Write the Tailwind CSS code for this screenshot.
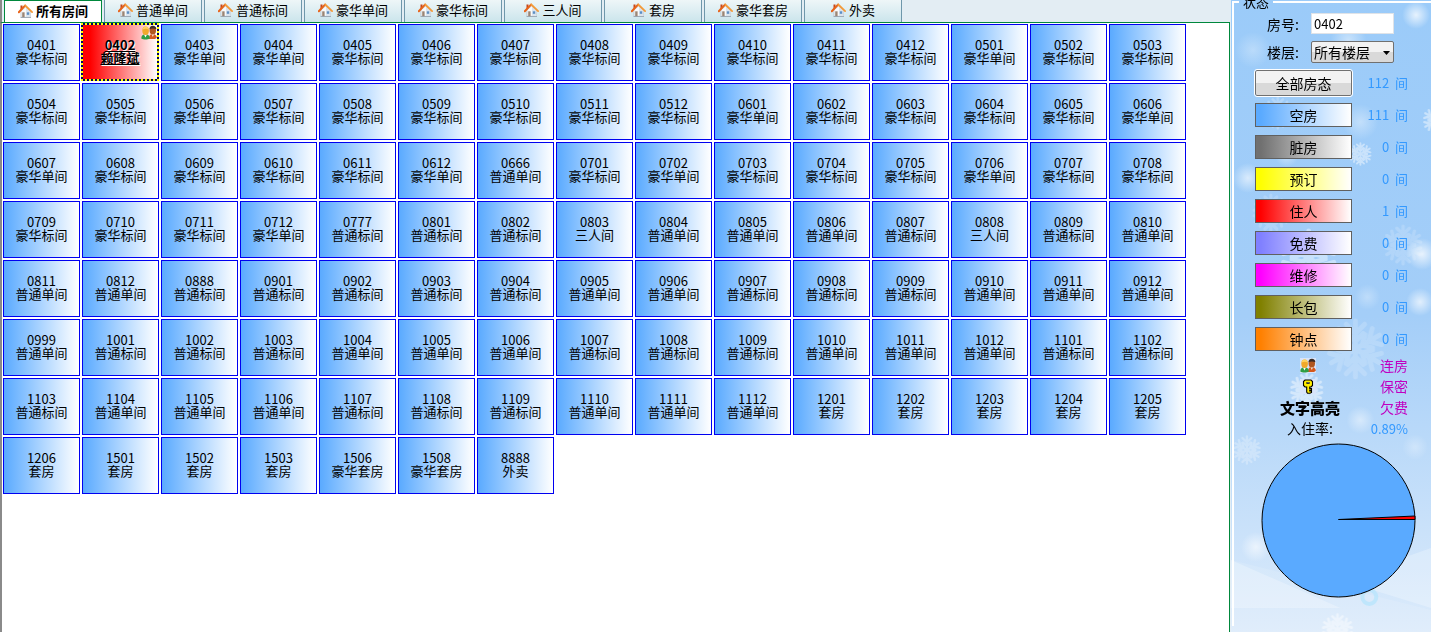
<!DOCTYPE html>
<html lang="zh-CN">
<head>
<meta charset="utf-8">
<meta name="viewport" content="width=device-width, initial-scale=1">
<title>房态</title>
<script src="https://cdn.jsdelivr.net/npm/@tailwindcss/browser@4"></script>
</head>
<body class="flex min-h-screen bg-[#e3edf3] text-[13px] text-black font-['Noto_Sans_CJK_SC',sans-serif]">

<svg class="hidden" aria-hidden="true">
  <symbol id="house" viewBox="0 0 15 14">
    <path d="M3 7 7.500 3 12.500 7v6.300H3z" fill="#f9fafb" stroke="#a9b3be" stroke-width=".6"/>
    <path d="M8 13.300V3.500L12.500 7v6.300z" fill="#dbe4ed"/>
    <path d="M2.500 1.500h2V5l-2 2z" fill="#c4471c"/>
    <path d="M.8 8.200 7 1.600" fill="none" stroke="#e8641a" stroke-width="2" stroke-linecap="round"/>
    <path d="m7.200 1.500 6.900 6.600" fill="none" stroke="#f39a3a" stroke-width="1.800" stroke-linecap="round"/>
    <path d="M4.200 8.300h2.400v5H4.200z" fill="#9b8675"/>
    <path d="M8.800 8.300h2.400v2.500H8.800z" fill="#5d8fc4"/>
    <path d="M2.500 13.500h10.500" stroke="#8d99a6" stroke-width=".7"/>
  </symbol>
  <symbol id="people" viewBox="0 0 16 15">
    <path d="M8 14c0-3.500 1-5 3.500-5s4.300 1.500 4.300 3.800L14 14z" fill="#d4581c"/>
    <path d="m10.500 9 1.300 3 1.400-3z" fill="#f6e9dc"/>
    <ellipse cx="11.800" cy="5.500" rx="3.200" ry="4" fill="#b0561f"/>
    <path d="M8.400 4.300C8.600 1.800 10 .7 11.900.7s3.500 1.300 3.500 3.600c-2-1-5-1-7 0z" fill="#3b2b24"/>
    <path d="M.3 13.500C.3 10.500 2 9.300 4.500 9.300s4.300 1.400 4.300 4.200c-2 1.400-6.500 1.400-8.500 0z" fill="#2f9e44"/>
    <path d="m3 9.500 1.500 3 1.500-3z" fill="#fff"/>
    <ellipse cx="4.600" cy="5.800" rx="3.300" ry="4.200" fill="#f0a92c"/>
    <path d="M1.600 4.500C2 2.500 3 1.600 4.700 1.600s2.700 1 3 2.900c-2-.9-4-.9-6.100 0z" fill="#ffd25e"/>
  </symbol>
  <symbol id="key" viewBox="0 0 12 15">
    <path d="M3 1h6l1.500 1.500v4L9 8H7.700v1.500h1.800V11H7.700v1h1.800v1.500L8 14.300H5.500L4.700 13V8H3L1.500 6.500v-4z" fill="#ffee00" stroke="#000" stroke-width="1.100"/>
    <path d="M4.500 3h3v2h-3z" fill="#000"/><path d="M5.300 3.500h1.500v.8H5.300z" fill="#fff"/>
  </symbol>
  <symbol id="flake" viewBox="-10 -10 20 20">
    <g fill="none" stroke="#fff" stroke-width="1.600" stroke-linecap="round">
      <path id="arm" d="M0 0V-9M0-5l-3-3M0-5l3-3M0-2.500-2.500-5M0-2.500 2.500-5"/>
      <use href="#arm" transform="rotate(60)"/><use href="#arm" transform="rotate(120)"/><use href="#arm" transform="rotate(180)"/><use href="#arm" transform="rotate(240)"/><use href="#arm" transform="rotate(300)"/>
    </g>
  </symbol>
</svg>

<main class="flex min-w-0 flex-1 flex-col">
  <nav id="tabs" class="flex h-[22px] gap-0.5 border-l-2 border-[#8a8a8a] pl-0.5" aria-label="房型"></nav>
  <section class="flex-1 border-t border-r border-l-2 border-t-[#00883c] border-r-[#00883c] border-l-[#8a8a8a] bg-white p-px">
    <div id="rooms" class="flex flex-wrap gap-0.5"></div>
  </section>
</main>

<aside class="relative w-[201px] shrink-0 overflow-hidden border-l border-[#e3edf3] bg-linear-to-b/srgb from-[#9bcbf9] via-[#a4cef8] to-[#dcebfb] pl-px text-sm">
  <svg class="absolute inset-0 size-full" viewBox="0 0 201 632" preserveAspectRatio="none" aria-hidden="true">
    <defs>
      <radialGradient id="glow"><stop offset="0" stop-color="#fff" stop-opacity=".75"/><stop offset="1" stop-color="#fff" stop-opacity="0"/></radialGradient>
    </defs>
    <path d="M0 560 201 610v22H0z" fill="#fff" opacity=".12"/>
    <path d="M0 560 110 608H0zM201 548 110 580l91 28z" fill="#fff" opacity=".25"/>
    <g fill="url(#glow)">
      <circle cx="186" cy="15" r="14"/><circle cx="22" cy="50" r="18" opacity=".4"/><circle cx="118" cy="40" r="18" opacity=".6"/>
      <circle cx="130" cy="122" r="18" opacity=".5"/><circle cx="17" cy="178" r="15" opacity=".8"/><circle cx="56" cy="155" r="12" opacity=".6"/>
      <circle cx="192" cy="254" r="16"/><circle cx="190" cy="302" r="14" opacity=".9"/><circle cx="137" cy="297" r="13" opacity=".4"/>
      <circle cx="25" cy="547" r="15" opacity=".8"/><circle cx="185" cy="447" r="13" opacity=".4"/><circle cx="130" cy="420" r="14" opacity=".6"/>
    </g>
    <g opacity=".45">
      <use href="#flake" x="118" y="142" width="24" height="24"/><use href="#flake" x="20" y="188" width="40" height="50" opacity=".4"/>
      <use href="#flake" x="48" y="228" width="60" height="60" opacity=".9"/><use href="#flake" x="94" y="318" width="62" height="62" opacity=".4"/>
      <use href="#flake" x="58" y="372" width="36" height="36"/><use href="#flake" x="1" y="432" width="30" height="36" opacity=".6"/>
      <use href="#flake" x="30" y="96" width="34" height="34" opacity=".5"/><use href="#flake" x="192" y="104" width="30" height="32"/>
      <use href="#flake" x="90" y="613" width="34" height="34"/><use href="#flake" x="152" y="220" width="42" height="50" opacity=".4"/>
    </g>
    <circle cx="139" cy="597" r="7" fill="none" stroke="#b4e4fc" stroke-width="4" opacity=".7"/>
  </svg>

  <fieldset class="relative -mt-[6px] h-full border-t-2 border-l-2 border-white pl-[21px]">
    <legend class="-ml-4 px-1 text-[13px] leading-4">状态</legend>
    <div class="grid grid-cols-[34px_83px] items-center gap-x-[10px] gap-y-[7px] pt-[3px] pl-3">
      <label for="room" class="whitespace-nowrap">房号:</label>
      <input id="room" value="0402" class="h-[21px] w-full border border-[#dfe3e8] bg-white px-0.5 text-[13px] outline-none">
      <label for="floor" class="whitespace-nowrap">楼层:</label>
      <div class="relative">
        <select id="floor" class="h-[22px] w-full appearance-none rounded-xs border border-[#707070] bg-linear-to-b/srgb from-[#f2f2f2] from-50% to-[#d9d9d9] to-50% pl-[2px] text-sm leading-5"><option>所有楼层</option></select>
        <svg class="pointer-events-none absolute top-[10px] right-1 h-1 w-[7px]" viewBox="0 0 7 4"><path d="M0 0h7L3.500 4z"/></svg>
      </div>
    </div>

    <div id="states" class="mt-1 flex flex-col"></div>

    <dl class="grid grid-cols-[98px_55px] items-center leading-[21px] text-[#c000c0]">
      <dt class="flex justify-center pl-2"><svg class="h-[15px] w-4 bg-[#d8e4fa]"><use href="#people"/></svg></dt><dd class="text-right">连房</dd>
      <dt class="flex justify-center pl-2"><svg class="h-[15px] w-4 bg-[#d8e4fa] pl-0.5"><use href="#key" width="12" height="15"/></svg></dt><dd class="text-right">保密</dd>
      <dt class="pl-3 text-center text-[15px] font-black text-black">文字高亮</dt><dd class="text-right">欠费</dd>
      <dt class="pl-3 text-center text-black">入住率:</dt><dd class="text-right text-[13px] text-[#3399ff]">0.89%</dd>
    </dl>
    <svg class="mt-1 ml-1.5 size-[155px]" viewBox="0 0 155 155" role="img" aria-label="入住率 0.89%">
      <circle cx="77.500" cy="77.500" r="76.500" fill="#5aaaff" stroke="#000"/>
      <path d="M77.500 76.500 154 73v3.500z" fill="#f00" stroke="#000"/>
    </svg>
  </fieldset>
</aside>

<script>
const house = '<svg class="h-3.5 w-[15px] shrink-0"><use href="#house"/></svg>';
document.getElementById('tabs').innerHTML = ['所有房间','普通单间','普通标间','豪华单间','豪华标间','三人间','套房','豪华套房','外卖'].map((t, i) => i === 0
  ? `<button class="-mb-px flex w-[98px] items-center justify-center gap-[3px] border-x border-t border-[#00883c] bg-white pb-0.5 text-[13px] font-bold">${house}${t}</button>`
  : `<button class="flex w-[98px] items-center justify-center gap-[3px] border-x border-[#6f97ab] bg-linear-to-b/srgb from-[#eef6f8] to-[#cbe5ec] pb-0.5 text-[13px]">${house}${t}</button>`).join('');

const types = {a:'豪华标间', b:'豪华单间', c:'普通标间', d:'普通单间', e:'三人间', f:'套房', g:'豪华套房', h:'外卖'};
const data = `0401a 0402x 0403b 0404b 0405a 0406a 0407a 0408a 0409a 0410a 0411a 0412a 0501b 0502a 0503a
0504a 0505a 0506b 0507a 0508a 0509a 0510a 0511a 0512a 0601b 0602a 0603a 0604a 0605a 0606b
0607b 0608a 0609a 0610a 0611a 0612b 0666d 0701a 0702b 0703a 0704a 0705a 0706b 0707a 0708a
0709a 0710a 0711a 0712b 0777c 0801c 0802c 0803e 0804d 0805d 0806d 0807c 0808e 0809c 0810d
0811d 0812d 0888c 0901c 0902c 0903c 0904c 0905d 0906d 0907c 0908c 0909c 0910d 0911d 0912d
0999d 1001c 1002c 1003c 1004d 1005d 1006d 1007c 1008c 1009c 1010d 1011d 1012d 1101c 1102c
1103c 1104d 1105d 1106d 1107c 1108c 1109c 1110d 1111d 1112d 1201f 1202f 1203f 1204f 1205f
1206f 1501f 1502f 1503f 1506g 1508g 8888h`;
document.getElementById('rooms').innerHTML = data.split(/\s+/).map(r => {
  const n = r.slice(0, 4), t = types[r[4]];
  return t
    ? `<button class="h-[57px] w-[77px] border border-[#0000f0] bg-linear-to-r/srgb from-[#5aaaff] to-white pb-[3px] text-[13px] leading-[13px]">${n}<br>${t}</button>`
    : `<button class="relative -mt-px -ml-px h-[58px] w-[78px] border-2 border-dotted border-[#ffff00] bg-[#000060]"><span class="flex size-full flex-col items-center justify-center bg-linear-to-r/srgb from-[#ff0000] from-10% to-white pb-0.5 text-[13px] leading-[13px] font-bold underline text-shadow-[1px_1px_0_#fff]"><span>${n}</span><span>赖隆斌</span></span><svg class="absolute top-0 right-0 h-[15px] w-4"><use href="#people"/></svg></button>`;
}).join('');

const states = [
  ['空房','111','from-[#5aaaff]'],['脏房','0','from-[#707070]'],['预订','0','from-[#ffff00]'],['住人','1','from-[#ff0000]'],
  ['免费','0','from-[#8080ff]'],['维修','0','from-[#ff00ff]'],['长包','0','from-[#808000]'],['钟点','0','from-[#ff8000]']];
const count = n => `<span class="flex-1 text-right text-[13px] text-[#3399ff]">${n}&nbsp; 间</span>`;
document.getElementById('states').innerHTML =
  `<div class="flex h-8 w-[153px] items-center"><button class="h-[26px] w-[97px] rounded-xs border border-[#707070] bg-linear-to-b/srgb from-[#f2f2f2] from-50% to-[#d9d9d9] to-50% outline outline-white">全部房态</button>${count(112)}</div>` +
  states.map(([n, c, g]) => `<div class="flex h-8 w-[153px] items-center"><button class="h-6 w-[97px] border border-[#606060] bg-linear-to-r/srgb ${g} from-5% to-white leading-5">${n}</button>${count(c)}</div>`).join('');
</script>
</body>
</html>
